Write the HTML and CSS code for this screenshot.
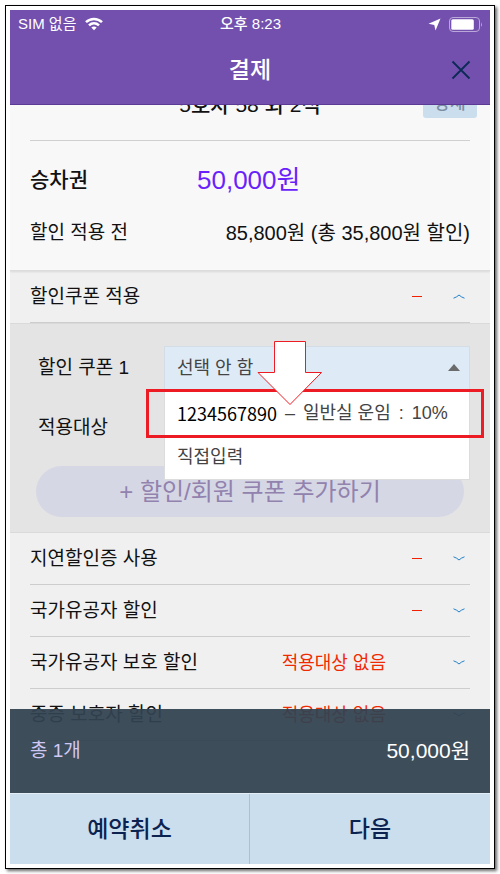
FILE: index.html
```html
<!DOCTYPE html>
<html lang="ko">
<head>
  <meta charset="UTF-8">
  <meta name="viewport" content="width=device-width, initial-scale=1">
  <title>결제</title>
  <link rel="stylesheet" href="styles.css">
</head>
<body>
  <div class="phone">
    <header class="header">
      <div class="status">
        <div class="status-left">
          <span>SIM 없음</span>
          <svg width="20" height="14" viewBox="0 0 20 14">
            <path d="M2 5.2 C6.5 0.8 13.5 0.8 18 5.2" fill="none" stroke="#fff" stroke-width="2.5"/>
            <path d="M5 8.4 C8 5.6 12 5.6 15 8.4" fill="none" stroke="#fff" stroke-width="2.5"/>
            <path d="M7.3 10.6 C9 9.2 11 9.2 12.7 10.6 L10 13.3 Z" fill="#fff"/>
          </svg>
        </div>
        <span class="time">오후 8:23</span>
        <div class="status-right">
          <svg width="13" height="13" viewBox="0 0 13 13">
            <path d="M12.5 0.5 L7.5 12.5 L6.3 7 L0.5 5.8 Z" fill="#fff"/>
          </svg>
          <svg width="34" height="15" viewBox="0 0 34 15">
            <rect x="0.5" y="0.5" width="30" height="14" rx="3.5" fill="none" stroke="#b9a8d8"/>
            <rect x="2.3" y="2.3" width="22.5" height="10.4" rx="1.5" fill="#fff"/>
            <path d="M32 5 Q33.8 7.5 32 10 Z" fill="#b9a8d8"/>
          </svg>
        </div>
      </div>
      <div class="titlebar">
        <h1>결제</h1>
        <button class="close" aria-label="닫기">
          <svg width="20" height="20" viewBox="0 0 20 20">
            <path d="M1.5 1.5 L18.5 18.5 M18.5 1.5 L1.5 18.5" stroke="#0b2a55" stroke-width="1.8"/>
          </svg>
        </button>
      </div>
    </header>

    <main class="content">
      <section class="ticket">
        <div class="seat">
          <span>5호차 58 외 2석</span>
          <button class="detail">상세</button>
        </div>
        <div class="fare">
          <strong>승차권</strong>
          <span class="price">50,000원</span>
        </div>
        <div class="before">
          <span>할인 적용 전</span>
          <span class="amount">85,800원 (총 35,800원 할인)</span>
        </div>
      </section>

      <button class="row">
        <span class="name">할인쿠폰 적용</span>
        <span class="dash"></span>
        <svg class="arrow" width="12" height="5" viewBox="0 0 12 5"><path d="M0.5 4.2 Q4 3 6 1 Q8 3 11.5 4.2"/></svg>
      </button>

      <section class="coupon">
        <div class="field">
          <label for="coupon">할인 쿠폰 1</label>
          <div class="picker">
            <select id="coupon">
              <option>선택 안 함</option>
            </select>
            <svg class="caret" width="12" height="7" viewBox="0 0 12 7"><path d="M0 7 L6 0 L12 7 Z"/></svg>
            <ul class="options">
              <li>
                <button>
                  <span class="code">1234567890</span>
                  <span>–</span>
                  <span>일반실 운임</span>
                  <span>:</span>
                  <span>10%</span>
                </button>
              </li>
              <li><button>직접입력</button></li>
            </ul>
            <div class="highlight"></div>
            <svg class="pointer" width="66" height="65" viewBox="0 0 66 65">
              <path d="M17.5 0.5 H48.5 V31.5 H64.5 L33 63.5 L1 31.5 H17.5 Z"/>
            </svg>
          </div>
        </div>
        <div class="field">
          <span>적용대상</span>
        </div>
        <button class="add">+ 할인/회원 쿠폰 추가하기</button>
      </section>

      <button class="row">
        <span class="name">지연할인증 사용</span>
        <span class="dash"></span>
        <svg class="arrow" width="12" height="5" viewBox="0 0 12 5"><path d="M0.5 0.8 Q4 2 6 4 Q8 2 11.5 0.8"/></svg>
      </button>
      <button class="row">
        <span class="name">국가유공자 할인</span>
        <span class="dash"></span>
        <svg class="arrow" width="12" height="5" viewBox="0 0 12 5"><path d="M0.5 0.8 Q4 2 6 4 Q8 2 11.5 0.8"/></svg>
      </button>
      <button class="row">
        <span class="name">국가유공자 보호 할인</span>
        <span class="none">적용대상 없음</span>
        <svg class="arrow" width="12" height="5" viewBox="0 0 12 5"><path d="M0.5 0.8 Q4 2 6 4 Q8 2 11.5 0.8"/></svg>
      </button>
      <button class="row">
        <span class="name">중증 보호자 할인</span>
        <span class="none">적용대상 없음</span>
        <svg class="arrow" width="12" height="5" viewBox="0 0 12 5"><path d="M0.5 0.8 Q4 2 6 4 Q8 2 11.5 0.8"/></svg>
      </button>

      <div class="total">
        <span class="count">총 1개</span>
        <span class="sum">50,000원</span>
      </div>
    </main>

    <footer class="actions">
      <button>예약취소</button>
      <button>다음</button>
    </footer>
  </div>
</body>
</html>
```

FILE: styles.css
```css
:root {
  --purple: #7350ae;
  --navy: #0b2350;
  --blue: #cbdeed;
  --red: #ed1c24;
  --line: #cdcdcd;
}

* {
  box-sizing: border-box;
}

body {
  margin: 0;
  padding: 5px;
  height: 100vh;
  background: #fff;
  color: #111;
  font-family: "Liberation Sans", "Noto Sans CJK KR", sans-serif;
  font-size: 19px;
  line-height: 28px;
}

button,
select {
  margin: 0;
  padding: 0;
  border: none;
  background: none;
  color: inherit;
  font: inherit;
  cursor: pointer;
}

.phone {
  height: 100%;
  display: flex;
  flex-direction: column;
  border: 1px solid #000;
  padding: 4px;
  background: #fff;
  box-shadow: 2px 2px 3px rgba(0, 0, 0, 0.6);
}

/* header */
.header {
  flex: none;
  background: var(--purple);
  border-bottom: 1px solid #5b3a96;
  color: #fff;
}

.status {
  display: grid;
  grid-template-columns: 1fr auto 1fr;
  align-items: center;
  height: 26px;
  padding: 0 7px 0 8px;
  font-size: 15px;
}

.status-left,
.status-right {
  display: flex;
  align-items: center;
  gap: 8px;
}

.status-right {
  justify-content: flex-end;
}

.time {
  font-weight: 500;
}

.titlebar {
  display: grid;
  grid-template-columns: 1fr auto 1fr;
  align-items: center;
  height: 68px;
  padding: 0 19px;
}

h1 {
  grid-column: 2;
  margin: 0;
  font-size: 23px;
  font-weight: 500;
}

.close {
  display: flex;
  justify-self: end;
}

/* scrolled content */
.content {
  position: relative;
  flex: 1;
  min-height: 0;
  overflow: hidden;
  background: #f0f0f0;
}

.ticket {
  padding: 0 20px;
  background: #f8f8f8;
  border-bottom: 1px solid #dcdcdc;
  box-shadow: 0 1px 2px rgba(0, 0, 0, 0.1);
}

.seat {
  display: flex;
  justify-content: center;
  align-items: center;
  position: relative;
  height: 72px;
  margin-top: -36px;
  border-bottom: 1px solid #d0d0d0;
  font-size: 21px;
  font-weight: 500;
}

.detail {
  position: absolute;
  right: -7px;
  bottom: 22px;
  width: 54px;
  height: 28px;
  border-radius: 3px;
  background: var(--blue);
  color: #7b8ea3;
  font-size: 17px;
}

.fare {
  display: grid;
  grid-template-columns: 167px 1fr;
  align-items: center;
  height: 78px;
}

.fare strong {
  font-size: 21px;
  font-weight: 500;
}

.price {
  color: #6a1ffb;
  font-size: 26px;
}

.before {
  display: flex;
  justify-content: space-between;
  height: 51px;
}

.amount {
  font-size: 20px;
}

.row {
  display: flex;
  align-items: center;
  width: calc(100% - 40px);
  height: 52px;
  margin: 0 20px;
  border-bottom: 1px solid var(--line);
  text-align: left;
}

.name {
  flex: 1;
}

.dash {
  width: 10px;
  height: 1px;
  margin-right: 31px;
  background: #f02000;
}

.none {
  margin-right: 67px;
  color: #f02a00;
  font-size: 18px;
}

.arrow {
  margin-right: 5px;
  fill: none;
  stroke: #2080c8;
}

/* coupon panel */
.coupon {
  height: 210px;
  padding: 14px 20px 0 28px;
  background: #e4e4e4;
  border-top: 1px solid #dadada;
  border-bottom: 1px solid #dadada;
}

.field {
  display: grid;
  grid-template-columns: 126px 1fr;
  align-items: center;
  height: 60px;
}

.picker {
  position: relative;
}

.picker select {
  display: block;
  width: 100%;
  height: 45px;
  padding: 0 12px;
  border: 1px solid #d4dde5;
  background: #deebf7;
  color: #444;
  font-size: 18px;
  appearance: none;
}

.caret {
  position: absolute;
  top: 18px;
  right: 10px;
  fill: #6b6b6b;
}

.options {
  position: absolute;
  top: 45px;
  left: 0;
  right: 0;
  margin: 0;
  padding: 0;
  border: 1px solid #dcdcdc;
  border-top: none;
  background: #fff;
  list-style: none;
}

.options button {
  display: flex;
  align-items: center;
  gap: 8px;
  width: 100%;
  height: 44px;
  padding: 0 12px;
  color: #444;
  font-size: 18px;
  white-space: nowrap;
}

.code {
  color: #000;
  font-family: "Noto Sans CJK KR", sans-serif;
}

.highlight {
  position: absolute;
  top: 43px;
  left: -18px;
  right: -14px;
  height: 49px;
  border: 3px solid var(--red);
}

.pointer {
  position: absolute;
  top: -5px;
  left: 93px;
  fill: #fff;
  stroke: var(--red);
}

.add {
  display: block;
  width: calc(100% - 4px);
  height: 51px;
  margin: 8px 0 0 -2px;
  border-radius: 26px;
  background: #d6d7e5;
  color: #9182ae;
  font-size: 24px;
}

/* bottom bar */
.total {
  position: absolute;
  left: 0;
  right: 0;
  bottom: 0;
  display: flex;
  justify-content: space-between;
  align-items: center;
  height: 84px;
  padding: 0 20px;
  background: rgba(50, 66, 80, 0.94);
}

.count {
  color: #cfc8f5;
}

.sum {
  color: #fff;
  font-size: 21px;
}

.actions {
  flex: none;
  display: grid;
  grid-template-columns: 1fr 1fr;
  height: 71px;
  background: var(--blue);
  border-top: 1px solid #e3eef6;
}

.actions button {
  color: var(--navy);
  font-size: 23px;
  font-weight: 500;
}

.actions button:first-child {
  border-right: 1px solid #aebfcd;
}
```
